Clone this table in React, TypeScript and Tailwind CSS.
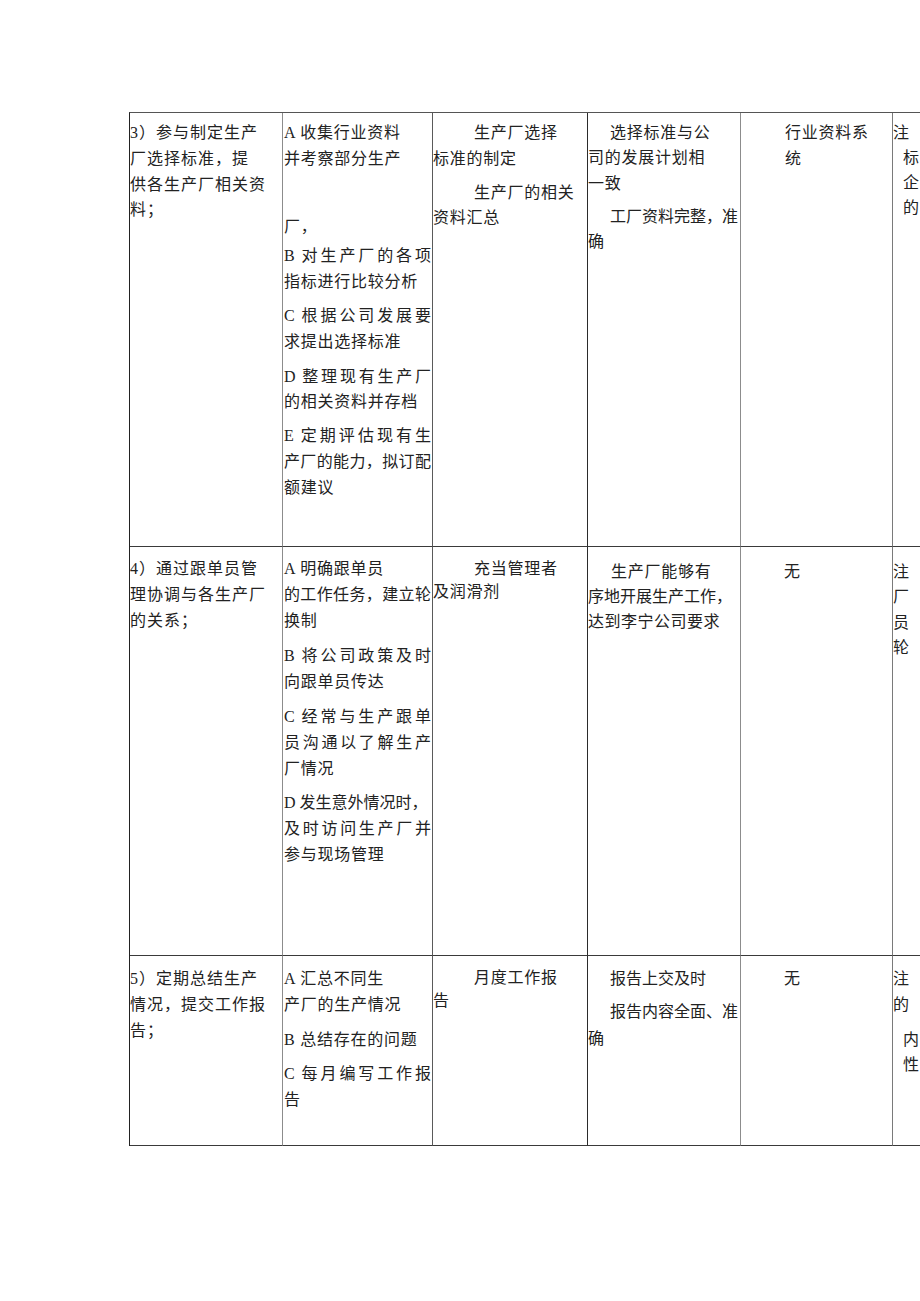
import React from 'react';
import clsx from 'clsx';

// one visual line of the scanned document; j = justified (spread to the cell edge)
const L = ({ children, j, className }: { children: React.ReactNode; j?: boolean; className?: string }) => (
  <div
    className={clsx(
      j ? 'text-justify [text-align-last:justify] tracking-[0px]' : 'whitespace-nowrap',
      className
    )}
  >
    {children}
  </div>
);

const Cell = ({ children, className }: { children?: React.ReactNode; className?: string }) => (
  <div className={clsx('border-b border-b-[#3a3a3a] border-r overflow-hidden', className)}>{children}</div>
);

// border colour of each column's right rule
const c1 = 'border-r-[#8c8c8c] pr-[10px]';
const c2 = 'border-r-[#5a5a5a] pl-[1px] pr-[1px]';
const c3 = 'border-r-[#2b2b2b]';
const c4 = 'border-r-[#8c8c8c]';
const c5 = 'border-r-[#7a7a7a]';
const c6 = 'border-r-transparent';

export default function App() {
  return (
    <div className="w-[920px] h-[1301px] overflow-hidden bg-white pt-[112px] pl-[129px] text-[16px] leading-[25.8px] tracking-[0.75px] text-[#222] font-['Liberation_Serif','Noto_Sans_CJK_SC',serif]">
      <div className="grid w-max grid-cols-[153px_150px_155px_153px_152px_152px] grid-rows-[434px_409px_190px] border-l border-l-[#222] border-t border-t-[#555]">
        {/* row 3 */}
        <Cell className={clsx(c1, 'pt-[7px] tracking-[1px]')}>
          <L>3）参与制定生产</L>
          <L>厂选择标准，提</L>
          <L>供各生产厂相关资</L>
          <L>料；</L>
        </Cell>
        <Cell className={clsx(c2, 'pt-[7px]')}>
          <L>A 收集行业资料</L>
          <L>并考察部分生产</L>
          <L className="mt-[42px]">厂，</L>
          <div className="mt-[4px]">
            <L j>B 对生产厂的各项</L>
            <L>指标进行比较分析</L>
          </div>
          <div className="mt-[8px]">
            <L j>C 根据公司发展要</L>
            <L>求提出选择标准</L>
          </div>
          <div className="mt-[9px]">
            <L j>D 整理现有生产厂</L>
            <L>的相关资料并存档</L>
          </div>
          <div className="mt-[8px]">
            <L j>E 定期评估现有生</L>
            <L j>产厂的能力，拟订配</L>
            <L>额建议</L>
          </div>
        </Cell>
        <Cell className={clsx(c3, 'pt-[7px]')}>
          <L className="pl-[41px]">生产厂选择</L>
          <L>标准的制定</L>
          <div className="mt-[8px]">
            <L className="pl-[41px]">生产厂的相关</L>
            <L>资料汇总</L>
          </div>
        </Cell>
        <Cell className={clsx(c4, 'pt-[7px] leading-[25.3px]')}>
          <L className="pl-[22px]">选择标准与公</L>
          <L>司的发展计划相</L>
          <L>一致</L>
          <div className="mt-[8px] tracking-[0px]">
            <L className="pl-[22px]">工厂资料完整，准</L>
            <L>确</L>
          </div>
        </Cell>
        <Cell className={clsx(c5, 'pt-[7px] pl-[44px]')}>
          <L>行业资料系</L>
          <L>统</L>
        </Cell>
        <Cell className={clsx(c6, 'pt-[7px] leading-[25px]')}>
          <L>注</L>
          <L className="pl-[10px]">标</L>
          <L className="pl-[10px]">企</L>
          <L className="pl-[10px]">的</L>
        </Cell>

        {/* row 4 */}
        <Cell className={clsx(c1, 'pt-[9px] tracking-[1px]')}>
          <L>4）通过跟单员管</L>
          <L>理协调与各生产厂</L>
          <L>的关系；</L>
        </Cell>
        <Cell className={clsx(c2, 'pt-[9px]')}>
          <L>A 明确跟单员</L>
          <L j>的工作任务，建立轮</L>
          <L>换制</L>
          <div className="mt-[10px]">
            <L j>B 将公司政策及时</L>
            <L>向跟单员传达</L>
          </div>
          <div className="mt-[9px]">
            <L j>C 经常与生产跟单</L>
            <L j>员沟通以了解生产</L>
            <L>厂情况</L>
          </div>
          <div className="mt-[9px]">
            <L className="tracking-[0px]">D 发生意外情况时，</L>
            <L j>及时访问生产厂并</L>
            <L>参与现场管理</L>
          </div>
        </Cell>
        <Cell className={clsx(c3, 'pt-[10px] leading-[23px]')}>
          <L className="pl-[41px]">充当管理者</L>
          <L>及润滑剂</L>
        </Cell>
        <Cell className={clsx(c4, 'pt-[12px] leading-[25px]')}>
          <L className="pl-[23px]">生产厂能够有</L>
          <L className="tracking-[0px]">序地开展生产工作，</L>
          <L className="tracking-[0.5px]">达到李宁公司要求</L>
        </Cell>
        <Cell className={clsx(c5, 'pt-[12px] pl-[43px]')}>
          <L>无</L>
        </Cell>
        <Cell className={clsx(c6, 'pt-[12px] leading-[25.3px]')}>
          <L>注</L>
          <L>厂</L>
          <L>员</L>
          <L>轮</L>
        </Cell>

        {/* row 5 */}
        <Cell className={clsx(c1, 'pt-[10px] tracking-[1px]')}>
          <L>5）定期总结生产</L>
          <L>情况，提交工作报</L>
          <L>告；</L>
        </Cell>
        <Cell className={clsx(c2, 'pt-[10px]')}>
          <L>A 汇总不同生</L>
          <L>产厂的生产情况</L>
          <L className="mt-[9px]">B 总结存在的问题</L>
          <div className="mt-[9px]">
            <L j>C 每月编写工作报</L>
            <L>告</L>
          </div>
        </Cell>
        <Cell className={clsx(c3, 'pt-[10px] leading-[23.4px]')}>
          <L className="pl-[41px]">月度工作报</L>
          <L>告</L>
        </Cell>
        <Cell className={clsx(c4, 'pt-[10px] tracking-[0px]')}>
          <L className="pl-[22px]">报告上交及时</L>
          <div className="mt-[6px] leading-[27px]">
            <L className="pl-[22px]">报告内容全面、准</L>
            <L>确</L>
          </div>
        </Cell>
        <Cell className={clsx(c5, 'pt-[10px] pl-[43px]')}>
          <L>无</L>
        </Cell>
        <Cell className={clsx(c6, 'pt-[10px] leading-[26px]')}>
          <L>注</L>
          <L>的</L>
          <div className="mt-[9px] pl-[10px] leading-[25px]">
            <L>内</L>
            <L>性</L>
          </div>
        </Cell>
      </div>
    </div>
  );
}
